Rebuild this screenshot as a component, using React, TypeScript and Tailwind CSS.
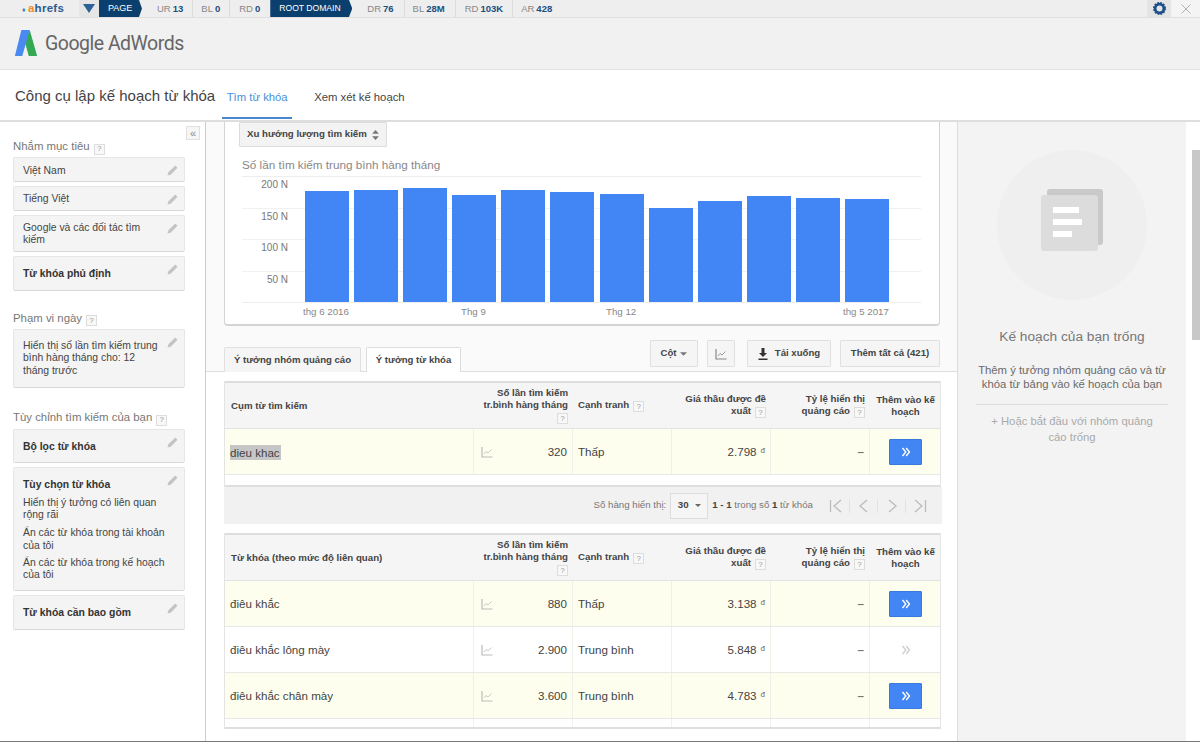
const F = "[font-family:'Liberation_Sans',Arial,sans-serif]";

function Help() {
  return (
    <span className="inline-flex items-center justify-center w-[11px] h-[11px] border border-[#ddd] bg-[#f8f8f8] text-[8px] font-normal leading-none text-[#999] align-[-1px] ml-1">?</span>
  );
}

function Pencil() {
  return (
    <svg viewBox="0 0 12 12" className="absolute right-[6px] top-[7px] w-[11px] h-[11px]">
      <path d="M0.5 11.5 L1.5 8 L8.5 1 Q9 0.5 9.6 1 L11 2.4 Q11.5 3 11 3.5 L4 10.5 Z" fill="#c4c4c4" />
    </svg>
  );
}

function SideBox({ children, className = "" }: { children: React.ReactNode; className?: string }) {
  return (
    <div className={`relative bg-[#f4f4f4] border border-[#e6e6e6] border-b-[#d8d8d8] rounded-[2px] pl-[9px] pr-[15px] text-[10.4px] leading-[12.3px] text-[#444] ${className}`}>
      {children}
      <Pencil />
    </div>
  );
}

function ChartIcon({ color = "#bbb" }: { color?: string }) {
  return (
    <svg viewBox="0 0 12 12" className="w-3 h-3">
      <path d="M1 1 V11 H11.5" stroke={color} strokeWidth="1.2" fill="none" />
      <path d="M3 8 L5 5.5 L7 7 L10.5 3.5" stroke={color} strokeWidth="0.8" fill="none" />
    </svg>
  );
}

function Chevrons({ color = "#fff" }: { color?: string }) {
  return (
    <svg viewBox="0 0 10 10" className="w-[10px] h-[10px]">
      <path d="M1.5 1 L4.8 5 L1.5 9 M5.2 1 L8.5 5 L5.2 9" stroke={color} strokeWidth="1.4" fill="none" />
    </svg>
  );
}

const Col = {
  c1: "w-[249px] shrink-0",
  c2: "w-[99px] shrink-0",
  c3: "w-[99px] shrink-0",
  c4: "w-[99px] shrink-0",
  c5: "w-[99px] shrink-0",
  c6: "w-[71px] shrink-0",
};

function THead({ first }: { first: string }) {
  return (
    <div className="flex h-[48px] bg-[#f5f5f5] border-t-2 border-[#dedede] border-b border-b-[#e2e2e2] text-[9.7px] font-bold leading-[12px] text-[#444] items-center">
      <div className={`${Col.c1} pl-[6px]`}>{first}</div>
      <div className={`${Col.c2} pr-[5px] text-right`}>
        Số lần tìm kiếm<br />tr.bình hàng tháng<br /><Help />
      </div>
      <div className={`${Col.c3} pl-[5px]`}>Cạnh tranh<Help /></div>
      <div className={`${Col.c4} pr-[5px] text-right`}>Giá thầu được đề<br />xuất<Help /></div>
      <div className={`${Col.c5} pr-[5px] text-right`}>Tỷ lệ hiển thị<br />quảng cáo<Help /></div>
      <div className={`${Col.c6} text-center`}>Thêm vào kế<br />hoạch</div>
    </div>
  );
}

function Row({ kw, vol, comp, bid, on, mark }: { kw: string; vol: string; comp: string; bid: string; on: boolean; mark?: boolean }) {
  return (
    <div className={`flex h-[46px] border-b border-[#e8e8e8] text-[11.6px] text-[#444] ${on ? "bg-[#fefeee]" : "bg-white"}`}>
      <div className={`${Col.c1} pl-[5px] pt-[1px] flex items-center border-r border-[#f0f0e8]`}>
        {mark ? <span className="bg-[#c6c6c6] pr-[1px] h-[15px] leading-[15px]">{kw}</span> : kw}
      </div>
      <div className={`${Col.c2} flex items-center justify-between pt-[1px] pl-[7px] pr-[5px] border-r border-[#f0f0e8]`}>
        <ChartIcon />
        <span>{vol}</span>
      </div>
      <div className={`${Col.c3} pl-[5px] pt-[1px] flex items-center border-r border-[#f0f0e8]`}>{comp}</div>
      <div className={`${Col.c4} flex items-center justify-end pt-[1px] pr-[5px] border-r border-[#f0f0e8]`}>
        {bid}<span className="text-[8px] ml-[4px] -mt-[3px] text-[#666]">đ</span>
      </div>
      <div className={`${Col.c5} flex items-center justify-end pt-[1px] pr-[5px] border-r border-[#f0f0e8] font-bold text-[#777]`}>–</div>
      <div className={`${Col.c6} flex items-center justify-center`}>
        {on ? (
          <div className="w-[33px] h-[26px] bg-[#4285f4] border border-[#3b78dc] rounded-[1px] flex items-center justify-center">
            <Chevrons />
          </div>
        ) : (
          <Chevrons color="#cfcfcf" />
        )}
      </div>
    </div>
  );
}

const bars = [111, 112, 114, 107, 112, 110, 108, 94, 101, 106, 104, 103];
const yLabels = ["200 N", "150 N", "100 N", "50 N"];

export default function App() {
  return (
    <div className={`${F} h-[742px] w-[1200px] overflow-hidden flex flex-col bg-white text-[#444]`}>
      {/* Ahrefs bar */}
      <div className="h-[18px] shrink-0 flex items-center bg-[#eeeeee] border-b border-[#e0e0e0] text-[9.5px] leading-none">
        <div className="w-[79px] pl-[22px] pt-[1px] flex items-center text-[11.5px] font-bold tracking-[0.3px] text-[#2c5c8f]">
          <span className="text-[7px] mr-[2px] text-[#4a7fb5]">♦</span>
          <span className="text-[#f08a24]">a</span>hrefs
        </div>
        <div className="w-[20px] h-full bg-[#e6e6e6] flex items-center justify-center">
          <svg viewBox="0 0 12 9" className="w-3 h-[9px]"><path d="M0 0 H12 L6 9 Z" fill="#2d6296" /></svg>
        </div>
        <div className="w-[43px] h-full bg-[#0b3f6e] text-white text-[9px] flex items-center pl-[9px] [clip-path:polygon(0_0,93%_0,100%_50%,93%_100%,0_100%)]">PAGE</div>
        <div className="flex h-full items-center pt-[1px] pl-[15px] gap-[2px] pr-[9px] border-r border-[#dcdcdc]"><span className="text-[#888]">UR</span><b className="text-[#1c4f80]">13</b></div>
        <div className="flex h-full items-center pt-[1px] pl-[8px] gap-[2px] pr-[9px] border-r border-[#dcdcdc]"><span className="text-[#888]">BL</span><b className="text-[#1c4f80]">0</b></div>
        <div className="flex h-full items-center pt-[1px] pl-[9px] gap-[2px] pr-[10px]"><span className="text-[#888]">RD</span><b className="text-[#1c4f80]">0</b></div>
        <div className="w-[82px] h-full bg-[#0b3f6e] text-white text-[8.6px] flex items-center pl-[9px] [clip-path:polygon(0_0,96%_0,100%_50%,96%_100%,0_100%)]">ROOT DOMAIN</div>
        <div className="flex h-full items-center pt-[1px] pl-[15px] gap-[2px] pr-[10px] border-r border-[#dcdcdc]"><span className="text-[#888]">DR</span><b className="text-[#1c4f80]">76</b></div>
        <div className="flex h-full items-center pt-[1px] pl-[8px] gap-[2px] pr-[10px] border-r border-[#dcdcdc]"><span className="text-[#888]">BL</span><b className="text-[#1c4f80]">28M</b></div>
        <div className="flex h-full items-center pt-[1px] pl-[9px] gap-[2px] pr-[9px] border-r border-[#dcdcdc]"><span className="text-[#888]">RD</span><b className="text-[#1c4f80]">103K</b></div>
        <div className="flex h-full items-center pt-[1px] pl-[8px] gap-[2px]"><span className="text-[#888]">AR</span><b className="text-[#1c4f80]">428</b></div>
        <div className="ml-auto flex h-full">
          <div className="w-[24px] h-full bg-[#e4e4e4] flex items-center justify-center">
            <svg viewBox="0 0 24 24" className="w-[13px] h-[13px]">
              <circle cx="12" cy="12" r="8" fill="none" stroke="#1c4f8a" strokeWidth="5" />
              <circle cx="12" cy="12" r="10.5" fill="none" stroke="#1c4f8a" strokeWidth="3" strokeDasharray="3.3 2.2" />
            </svg>
          </div>
          <div className="w-[29px] h-full bg-[#f4f4f4] flex items-center justify-center">
            <svg viewBox="0 0 10 10" className="w-[10px] h-[10px]"><path d="M0.5 0.5 L9.5 9.5 M9.5 0.5 L0.5 9.5" stroke="#aaa" strokeWidth="0.9" /></svg>
          </div>
        </div>
      </div>

      {/* AdWords header */}
      <div className="h-[52px] shrink-0 bg-[#f1f1f1] border-b border-[#e0e0e0] flex items-center pl-[14px] gap-[7px]">
        <svg viewBox="0 0 24 28" className="w-[24px] h-[26px] -mt-[1px]">
          <path d="M16 0 L24 28 H15 L10.5 12 Z" fill="#34a853" />
          <path d="M7 0 H16 L8 28 H0 Z" fill="#4a8af0" />
        </svg>
        <div className="text-[19.5px] tracking-[-0.5px] text-[#666] font-['Roboto',sans-serif] whitespace-nowrap">Google AdWords</div>
      </div>

      {/* Nav */}
      <div className="h-[52px] shrink-0 bg-white border-b-2 border-[#dedede] flex items-stretch pl-[15px]">
        <div className="text-[15px] leading-[52px] text-[#444] whitespace-nowrap">Công cụ lập kế hoạch từ khóa</div>
        <div className="ml-[7px] w-[70px] h-[49px] border-b-[2px] border-[#4a86d0] text-center text-[11.3px] leading-[54px] text-[#4a90d9]">Tìm từ khóa</div>
        <div className="ml-[22px] text-[11.3px] leading-[54px] text-[#444]">Xem xét kế hoạch</div>
      </div>

      {/* Body */}
      <div className="flex-1 min-h-0 flex border-b border-[#777]">
        {/* Sidebar */}
        <aside className="relative w-[206px] shrink-0 border-r border-[#ccc] pl-[13px] pr-[20px] pt-[17px] overflow-hidden">
          <div className="absolute right-[5px] top-[4px] w-[14px] h-[14px] border border-[#e0e0e0] bg-[#f6f6f6] flex items-center justify-center text-[11px] leading-none text-[#888]">«</div>
          <div className="text-[11.4px] leading-[14px] text-[#777] mb-[2px]">Nhắm mục tiêu<Help /></div>
          <div className="flex flex-col gap-[4px]">
            <SideBox className="h-[25px] pt-[7px]">Việt Nam</SideBox>
            <SideBox className="h-[25px] pt-[6px]">Tiếng Việt</SideBox>
            <SideBox className="h-[37px] pt-[6px]"><div className="w-[140px]">Google và các đối tác tìm kiếm</div></SideBox>
            <SideBox className="h-[35px] pt-[11px]"><b className="text-[#333]">Từ khóa phủ định</b></SideBox>
          </div>
          <div className="text-[11.4px] leading-[14px] text-[#777] mt-[20px] mb-[3px]">Phạm vi ngày<Help /></div>
          <SideBox className="h-[59px] pt-[10px]"><div className="w-[140px]">Hiển thị số lần tìm kiếm trung bình hàng tháng cho: 12 tháng trước</div></SideBox>
          <div className="text-[11.4px] leading-[14px] text-[#777] mt-[22px] mb-[3px]">Tùy chỉnh tìm kiếm của bạn<Help /></div>
          <div className="flex flex-col gap-[4px]">
            <SideBox className="h-[34px] pt-[11px]"><b className="text-[#333]">Bộ lọc từ khóa</b></SideBox>
            <SideBox className="h-[124px] pt-[11px]">
              <b className="text-[#333] block mb-[6px]">Tùy chọn từ khóa</b>
              <div className="mb-[6px]">Hiển thị ý tưởng có liên quan rộng rãi</div>
              <div className="mb-[5px]">Ẩn các từ khóa trong tài khoản của tôi</div>
              <div>Ẩn các từ khóa trong kế hoạch của tôi</div>
            </SideBox>
            <SideBox className="h-[35px] pt-[11px]"><b className="text-[#333]">Từ khóa cần bao gồm</b></SideBox>
          </div>
        </aside>

        {/* Main column */}
        <main className="w-[752px] shrink-0 border-r border-[#ddd] overflow-hidden flex flex-col">
          {/* Upper grey area */}
          <div className="h-[250px] shrink-0 bg-[#fafafa] border-b border-[#ddd] px-[18px]">
            <div className="w-[716px] h-[204px] bg-white border border-t-0 border-[#d4d4d4] border-b-2 rounded-b-[4px] pl-[14px] pr-[18px]">
              <div className="w-[148px] h-[25px] bg-[#f3f3f3] border border-[#dcdcdc] rounded-[1px] flex items-center pl-[7px] gap-[5px] text-[9.7px] font-bold text-[#444] whitespace-nowrap">
                Xu hướng lượng tìm kiếm
                <svg viewBox="0 0 8 12" className="w-[7px] h-[10px]"><path d="M4 0 L8 4.5 H0 Z M4 12 L8 7.5 H0 Z" fill="#777" /></svg>
              </div>
              <div className="text-[11.7px] leading-[14px] mt-[11px] ml-[3px] text-[#888]">Số lần tìm kiếm trung bình hàng tháng</div>
              <div className="relative ml-[3px] mt-[4px] h-[127px] border-b border-t border-[#eee]">
                <div className="absolute left-0 right-0 top-[31px] border-t border-[#f0f0f0]" />
                <div className="absolute left-0 right-0 top-[62px] border-t border-[#f0f0f0]" />
                <div className="absolute left-0 right-0 top-[94px] border-t border-[#f0f0f0]" />
                <div className="absolute left-0 top-[1px] w-[46px] flex flex-col items-end gap-[18.5px] text-[10px] leading-[13px] text-[#777]">
                  {yLabels.map((l) => <div key={l}>{l}</div>)}
                </div>
                <div className="absolute left-[63px] bottom-0 flex items-end gap-[5.1px]">
                  {bars.map((h, i) => (
                    <div key={i} className="w-[44px] bg-[#4285f4]" style={{ height: h }} />
                  ))}
                </div>
              </div>
              <div className="relative h-[18px] text-[9.7px] leading-[18px] text-[#888]">
                <span className="absolute left-[64px]">thg 6 2016</span>
                <span className="absolute left-[222px]">Thg 9</span>
                <span className="absolute left-[367px]">Thg 12</span>
                <span className="absolute left-[604px]">thg 5 2017</span>
              </div>
            </div>
            <div className="w-[716px] flex items-end justify-between mt-[14px]">
              <div className="flex gap-[5px] pt-[7px] items-end">
                <div className="w-[137px] h-[25px] bg-[#f5f5f5] border border-b-0 border-[#e0e0e0] rounded-t-[2px] flex items-center justify-center text-[9.6px] font-bold text-[#444] whitespace-nowrap">Ý tưởng nhóm quảng cáo</div>
                <div className="w-[95px] h-[26px] -mb-[1px] bg-white border border-b-0 border-[#ddd] rounded-t-[2px] flex items-center justify-center text-[9.6px] font-bold text-[#444] whitespace-nowrap">Ý tưởng từ khóa</div>
              </div>
              <div className="flex h-[27px] mb-[5px] text-[9.6px] font-bold text-[#444]">
                <div className="w-[48px] bg-[#f5f5f5] border border-[#e0e0e0] rounded-[1px] flex items-center justify-center gap-[4px]">
                  Cột<svg viewBox="0 0 8 4" className="w-[7px] h-[4px]"><path d="M0 0 H8 L4 4 Z" fill="#777" /></svg>
                </div>
                <div className="ml-[9px] w-[28px] bg-[#f5f5f5] border border-[#e0e0e0] rounded-[1px] flex items-center justify-center"><ChartIcon color="#888" /></div>
                <div className="ml-[12px] w-[84px] bg-[#f5f5f5] border border-[#e0e0e0] rounded-[1px] flex items-center justify-center gap-[7px]">
                  <svg viewBox="0 0 10 12" className="w-[10px] h-[12px]"><path d="M3.5 0 H6.5 V5 H9 L5 9 L1 5 H3.5 Z M0.5 10.5 H9.5 V12 H0.5 Z" fill="#333" /></svg>
                  Tải xuống
                </div>
                <div className="ml-[9px] w-[100px] bg-[#f5f5f5] border border-[#e0e0e0] rounded-[1px] flex items-center justify-center">Thêm tất cả (421)</div>
              </div>
            </div>
          </div>

          {/* Tables */}
          <div className="flex-1 bg-white pl-[18px] pt-[9px]">
            <div className="w-[717px] border-x border-[#e4e4e4]">
              <THead first="Cụm từ tìm kiếm" />
              <Row kw="dieu khac" vol="320" comp="Thấp" bid="2.798" on mark />
              <div className="h-[12px] bg-white border-b-2 border-[#dedede]" />
            </div>
            <div className="w-[718px] h-[37px] bg-[#f1f1f1] flex items-center pr-[8px] justify-end text-[9.7px] text-[#777]">
              <span>Số hàng hiển thị:</span>
              <div className="ml-[4px] w-[38px] h-[26px] bg-[#f5f5f5] border border-[#ddd] flex items-center justify-center gap-[6px] font-bold text-[#444]">
                30<svg viewBox="0 0 8 4" className="w-[6px] h-[3px]"><path d="M0 0 H8 L4 4 Z" fill="#666" /></svg>
              </div>
              <span className="ml-[4px]"><b className="text-[#444]">1 - 1</b> trong số <b className="text-[#444]">1</b> từ khóa</span>
              <div className="ml-[9px] flex items-center h-[20px] divide-x divide-[#e2e2e2]">
                <div className="w-[28px] flex justify-center"><svg viewBox="0 0 14 14" className="w-[14px] h-[14px]"><path d="M1.5 1 V13 M12 1 L5 7 L12 13" stroke="#bbb" strokeWidth="1.3" fill="none" /></svg></div>
                <div className="w-[28px] flex justify-center"><svg viewBox="0 0 14 14" className="w-[14px] h-[14px]"><path d="M10 1 L3 7 L10 13" stroke="#bbb" strokeWidth="1.3" fill="none" /></svg></div>
                <div className="w-[28px] flex justify-center"><svg viewBox="0 0 14 14" className="w-[14px] h-[14px]"><path d="M4 1 L11 7 L4 13" stroke="#bbb" strokeWidth="1.3" fill="none" /></svg></div>
                <div className="w-[28px] flex justify-center"><svg viewBox="0 0 14 14" className="w-[14px] h-[14px]"><path d="M2 1 L9 7 L2 13 M12.5 1 V13" stroke="#bbb" strokeWidth="1.3" fill="none" /></svg></div>
              </div>
            </div>
            <div className="w-[717px] mt-[9px] border-x border-[#e4e4e4]">
              <THead first="Từ khóa (theo mức độ liên quan)" />
              <Row kw="điêu khắc" vol="880" comp="Thấp" bid="3.138" on />
              <Row kw="điêu khắc lông mày" vol="2.900" comp="Trung bình" bid="5.848" on={false} />
              <Row kw="điêu khắc chân mày" vol="3.600" comp="Trung bình" bid="4.783" on />
              <div className="flex h-[10px] border-b-2 border-[#dedede]">
                <div className="w-[249px] border-r border-[#f0f0f0]" />
                <div className="w-[99px] border-r border-[#f0f0f0]" />
                <div className="w-[99px] border-r border-[#f0f0f0]" />
                <div className="w-[99px] border-r border-[#f0f0f0]" />
                <div className="w-[99px] border-r border-[#f0f0f0]" />
              </div>
            </div>
          </div>
        </main>

        {/* Plan panel */}
        <section className="w-[228px] shrink-0 bg-[#f3f3f3] flex flex-col items-center pt-[28px] px-[18px]">
          <div className="w-[150px] h-[150px] shrink-0 rounded-full bg-[#efefef] flex items-center justify-center">
            <div className="relative w-[62px] h-[62px] -mt-[10px]">
              <div className="absolute right-0 top-0 w-[56px] h-[56px] rounded-[3px] bg-[#c9c9c9]" />
              <div className="absolute left-0 bottom-0 w-[57px] h-[56px] rounded-[3px] bg-[#dcdcdc] flex flex-col gap-[6px] pt-[12px] pl-[12px]">
                <div className="w-[26px] h-[6px] bg-white" />
                <div className="w-[29px] h-[6px] bg-white" />
                <div className="w-[19px] h-[6px] bg-white" />
              </div>
            </div>
          </div>
          <div className="mt-[28px] text-[13.7px] leading-[18px] text-[#777] whitespace-nowrap">Kế hoạch của bạn trống</div>
          <div className="mt-[17px] text-[11.3px] leading-[14px] text-[#6a6a6a] text-center">Thêm ý tưởng nhóm quảng cáo và từ khóa từ bảng vào kế hoạch của bạn</div>
          <div className="mt-[13px] w-full border-t border-[#ddd] pt-[8px] text-[11.3px] leading-[16px] text-[#aaa] text-center px-[10px]">+ Hoặc bắt đầu với nhóm quảng cáo trống</div>
        </section>

        {/* Scrollbar */}
        <div className="flex-1 flex justify-end pt-[28px]">
          <div className="w-[8px] h-[190px] bg-[#c8c8c8]" />
        </div>
      </div>
    </div>
  );
}
